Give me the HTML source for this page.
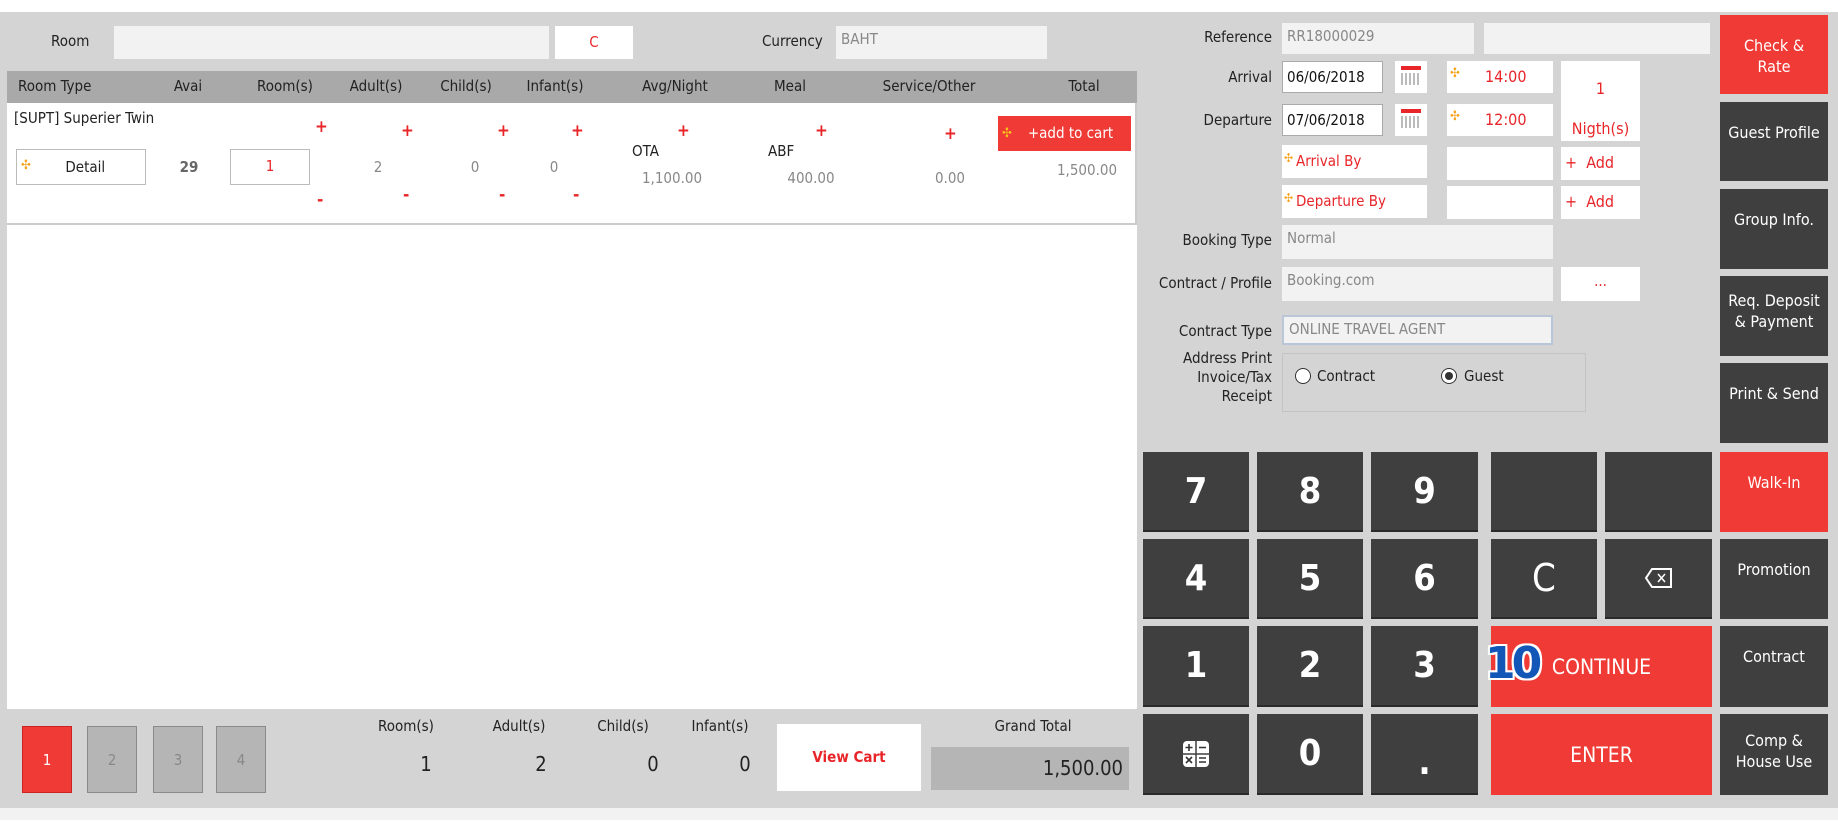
<!DOCTYPE html>
<html><head><meta charset="utf-8"><style>
*{box-sizing:border-box;margin:0;padding:0}
body{width:1838px;height:828px;background:#fff;font-family:"DejaVu Sans Condensed","Liberation Sans",sans-serif;font-size:15px;color:#222;position:relative;overflow:hidden}
.a{position:absolute}
.in{position:absolute;background:#f2f2f2;color:#888;padding:4px 5px}
.w{position:absolute;background:#fff}
.lbl{position:absolute;text-align:right}
.c{text-align:center}
.red{color:#e8262a}
.k{position:absolute;background:#3f3f3f;color:#fff;display:flex;align-items:center;justify-content:center;font-weight:bold;font-size:36px;border-bottom:2px solid #2a2a2a}
.sb{position:absolute;background:#3f3f3f;color:#fff;text-align:center;font-size:16px;padding-top:20px;line-height:21px}
.rb{background:#f03a35}
.pl{position:absolute;color:#e8262a;font-size:17px;font-weight:bold}
.pg{position:absolute;background:#b5b5b5;border:1px solid #8a8a8a;color:#888;display:flex;align-items:center;justify-content:center;font-size:15px}
#R{position:absolute;left:-5px;top:0;width:1838px;height:828px}
</style></head><body>
<div class="a" style="left:0;top:12px;width:1838px;height:796px;background:#d4d4d4"></div>
<div class="a" style="left:0;top:808px;width:1838px;height:12px;background:#f2f2f2"></div>

<!-- top left -->
<div class="a" style="left:51px;top:32px">Room</div>
<div class="in" style="left:114px;top:26px;width:435px;height:33px"></div>
<div class="w red c" style="left:555px;top:26px;width:78px;height:33px;line-height:33px">C</div>
<div class="a" style="left:762px;top:32px">Currency</div>
<div class="in" style="left:836px;top:26px;width:211px;height:33px">BAHT</div>

<!-- table -->
<div class="a" style="left:7px;top:71px;width:1130px;height:32px;background:#a9a9a9"></div>
<div class="a" style="left:7px;top:103px;width:1130px;height:606px;background:#fff"></div>
<div class="a" style="left:7px;top:223px;width:1130px;height:2px;background:#ccc"></div>
<div class="a" style="left:1135px;top:103px;width:2px;height:122px;background:#ccc"></div>
<div class="a" style="left:18px;top:77px">Room Type</div>
<div class="a c" style="left:148px;top:77px;width:80px">Avai</div>
<div class="a c" style="left:245px;top:77px;width:80px">Room(s)</div>
<div class="a c" style="left:336px;top:77px;width:80px">Adult(s)</div>
<div class="a c" style="left:426px;top:77px;width:80px">Child(s)</div>
<div class="a c" style="left:515px;top:77px;width:80px">Infant(s)</div>
<div class="a c" style="left:625px;top:77px;width:100px">Avg/Night</div>
<div class="a c" style="left:750px;top:77px;width:80px">Meal</div>
<div class="a c" style="left:869px;top:77px;width:120px">Service/Other</div>
<div class="a c" style="left:1044px;top:77px;width:80px">Total</div>

<div class="a" style="left:14px;top:109px">[SUPT] Superier Twin</div>
<div class="pl" style="left:315px;top:117px">+</div><div class="pl" style="left:401px;top:121px">+</div><div class="pl" style="left:497px;top:121px">+</div><div class="pl" style="left:571px;top:121px">+</div><div class="pl" style="left:677px;top:121px">+</div><div class="pl" style="left:815px;top:121px">+</div><div class="pl" style="left:944px;top:124px">+</div>
<div class="pl" style="left:317px;top:190px">-</div><div class="pl" style="left:403px;top:185px">-</div><div class="pl" style="left:499px;top:185px">-</div><div class="pl" style="left:573px;top:185px">-</div>
<div class="a" style="left:16px;top:149px;width:130px;height:36px;border:1px solid #bbb;line-height:34px;text-align:center">&nbsp;&nbsp;Detail<span class="a" style="left:4px;top:-1px;color:#f7a21b;font-size:13px">✣</span></div>
<div class="a c" style="left:169px;top:158px;width:40px;color:#666;font-weight:bold">29</div>
<div class="a c red" style="left:230px;top:149px;width:80px;height:36px;border:1px solid #bbb;line-height:32px">1</div>
<div class="a c" style="left:358px;top:158px;width:40px;color:#888">2</div>
<div class="a c" style="left:455px;top:158px;width:40px;color:#888">0</div>
<div class="a c" style="left:534px;top:158px;width:40px;color:#888">0</div>
<div class="a" style="left:632px;top:142px">OTA</div>
<div class="a" style="left:768px;top:142px">ABF</div>
<div class="a c" style="left:622px;top:169px;width:100px;color:#888">1,100.00</div>
<div class="a c" style="left:761px;top:169px;width:100px;color:#888">400.00</div>
<div class="a c" style="left:900px;top:169px;width:100px;color:#888">0.00</div>
<div class="a c" style="left:1037px;top:161px;width:100px;color:#888">1,500.00</div>
<div class="a c" style="left:998px;top:116px;width:133px;height:35px;background:#f03a35;color:#fff;line-height:35px;padding-left:12px">+add to cart<span class="a" style="left:4px;top:0;color:#f7c21b;font-size:13px">✣</span></div>

<!-- bottom bar -->
<div class="a" style="left:7px;top:709px;width:1130px;height:98px;background:#d4d4d4"></div>
<div class="pg" style="left:22px;top:726px;width:50px;height:67px;background:#f03a35;color:#fff;border-color:#c22">1</div>
<div class="pg" style="left:87px;top:726px;width:50px;height:67px">2</div>
<div class="pg" style="left:153px;top:726px;width:50px;height:67px">3</div>
<div class="pg" style="left:216px;top:726px;width:50px;height:67px">4</div>
<div class="a c" style="left:366px;top:717px;width:80px">Room(s)</div>
<div class="a c" style="left:479px;top:717px;width:80px">Adult(s)</div>
<div class="a c" style="left:583px;top:717px;width:80px">Child(s)</div>
<div class="a c" style="left:680px;top:717px;width:80px">Infant(s)</div>
<div class="a c" style="left:386px;top:752px;width:80px;font-size:20px">1</div>
<div class="a c" style="left:501px;top:752px;width:80px;font-size:20px">2</div>
<div class="a c" style="left:613px;top:752px;width:80px;font-size:20px">0</div>
<div class="a c" style="left:705px;top:752px;width:80px;font-size:20px">0</div>
<div class="w c red" style="left:777px;top:724px;width:144px;height:67px;line-height:67px;font-weight:bold">View Cart</div>
<div class="a c" style="left:973px;top:717px;width:120px">Grand Total</div>
<div class="a" style="left:931px;top:747px;width:198px;height:43px;background:#b5b5b5;text-align:right;padding:9px 6px;font-size:20px">1,500.00</div>

<div id="R">
<!-- right form -->
<div class="lbl" style="left:1150px;top:28px;width:127px">Reference</div>
<div class="in" style="left:1287px;top:23px;width:192px;height:31px">RR18000029</div>
<div class="in" style="left:1489px;top:23px;width:226px;height:31px"></div>
<div class="lbl" style="left:1150px;top:68px;width:127px">Arrival</div>
<div class="w" style="left:1287px;top:61px;width:101px;height:32px;border:1px solid #aaa;padding:6px 4px;color:#111">06/06/2018</div>
<div class="lbl" style="left:1150px;top:111px;width:127px">Departure</div>
<div class="w" style="left:1287px;top:104px;width:101px;height:32px;border:1px solid #aaa;padding:6px 4px;color:#111">07/06/2018</div>
<div class="w" style="left:1400px;top:61px;width:32px;height:32px"><div class="a" style="left:6px;top:5px;width:20px;height:4px;background:#e8262a"></div><div class="a" style="left:6px;top:12px;width:20px;height:12px;background:repeating-linear-gradient(90deg,#bbb 0 2px,#fff 2px 4px)"></div></div>
<div class="w" style="left:1400px;top:104px;width:32px;height:32px"><div class="a" style="left:6px;top:5px;width:20px;height:4px;background:#e8262a"></div><div class="a" style="left:6px;top:12px;width:20px;height:12px;background:repeating-linear-gradient(90deg,#bbb 0 2px,#fff 2px 4px)"></div></div>
<div class="w red" style="left:1452px;top:61px;width:106px;height:32px;padding:6px 0 0 38px;font-size:16px">14:00<span class="a" style="left:3px;top:5px;color:#f7a21b;font-size:13px">✣</span></div>
<div class="w red" style="left:1452px;top:104px;width:106px;height:32px;padding:6px 0 0 38px;font-size:16px">12:00<span class="a" style="left:3px;top:5px;color:#f7a21b;font-size:13px">✣</span></div>
<div class="w red c" style="left:1566px;top:61px;width:79px;height:80px;padding-top:8px;line-height:40px;font-size:16px">1<br>Nigth(s)</div>
<div class="w red" style="left:1287px;top:145px;width:145px;height:33px;padding:7px 0 0 14px">Arrival By<span class="a" style="left:2px;top:6px;color:#f7a21b;font-size:12px">✣</span></div>
<div class="w red" style="left:1287px;top:185px;width:145px;height:33px;padding:7px 0 0 14px">Departure By<span class="a" style="left:2px;top:6px;color:#f7a21b;font-size:12px">✣</span></div>
<div class="w" style="left:1452px;top:147px;width:106px;height:33px"></div>
<div class="w" style="left:1452px;top:186px;width:106px;height:33px"></div>
<div class="w red" style="left:1566px;top:147px;width:79px;height:33px;padding:6px 0 0 4px;font-size:16px">+&nbsp; Add</div>
<div class="w red" style="left:1566px;top:186px;width:79px;height:33px;padding:6px 0 0 4px;font-size:16px">+&nbsp; Add</div>
<div class="lbl" style="left:1140px;top:231px;width:137px">Booking Type</div>
<div class="in" style="left:1287px;top:225px;width:271px;height:34px">Normal</div>
<div class="lbl" style="left:1140px;top:274px;width:137px">Contract / Profile</div>
<div class="in" style="left:1287px;top:267px;width:271px;height:34px">Booking.com</div>
<div class="w red c" style="left:1566px;top:267px;width:79px;height:34px;line-height:28px">...</div>
<div class="lbl" style="left:1140px;top:322px;width:137px">Contract Type</div>
<div class="in" style="left:1287px;top:315px;width:271px;height:30px;border:2px solid #b8c6d8;padding:3px 5px">ONLINE TRAVEL AGENT</div>
<div class="lbl" style="left:1140px;top:349px;width:137px;line-height:19px">Address Print<br>Invoice/Tax<br>Receipt</div>
<div class="a" style="left:1287px;top:353px;width:304px;height:59px;border:1px solid #c4c4c4"></div>
<div class="a" style="left:1300px;top:368px;width:16px;height:16px;border:1px solid #333;border-radius:50%;background:#fff"></div>
<div class="a" style="left:1322px;top:367px">Contract</div>
<div class="a" style="left:1446px;top:368px;width:16px;height:16px;border:1px solid #333;border-radius:50%;background:#fff"><div class="a" style="left:3px;top:3px;width:8px;height:8px;border-radius:50%;background:#333"></div></div>
<div class="a" style="left:1469px;top:367px">Guest</div>

<!-- side buttons -->
<div class="sb rb" style="left:1725px;top:15px;width:108px;height:79px">Check &amp;<br>Rate</div>
<div class="sb" style="left:1725px;top:102px;width:108px;height:79px">Guest Profile</div>
<div class="sb" style="left:1725px;top:189px;width:108px;height:80px">Group Info.</div>
<div class="sb" style="left:1725px;top:276px;width:108px;height:80px;padding-top:14px">Req. Deposit<br>&amp; Payment</div>
<div class="sb" style="left:1725px;top:363px;width:108px;height:80px">Print &amp; Send</div>
<div class="sb rb" style="left:1725px;top:452px;width:108px;height:80px">Walk-In</div>
<div class="sb" style="left:1725px;top:539px;width:108px;height:80px">Promotion</div>
<div class="sb" style="left:1725px;top:626px;width:108px;height:81px">Contract</div>
<div class="sb" style="left:1725px;top:714px;width:108px;height:81px;padding-top:16px">Comp &amp;<br>House Use</div>

<!-- keypad -->
<div class="k" style="left:1148px;top:452px;width:106px;height:80px">7</div>
<div class="k" style="left:1262px;top:452px;width:106px;height:80px">8</div>
<div class="k" style="left:1376px;top:452px;width:107px;height:80px">9</div>
<div class="k" style="left:1496px;top:452px;width:106px;height:80px"></div>
<div class="k" style="left:1610px;top:452px;width:107px;height:80px"></div>
<div class="k" style="left:1148px;top:539px;width:106px;height:80px">4</div>
<div class="k" style="left:1262px;top:539px;width:106px;height:80px">5</div>
<div class="k" style="left:1376px;top:539px;width:107px;height:80px">6</div>
<div class="k" style="left:1496px;top:539px;width:106px;height:80px;font-weight:normal;font-size:38px">C</div>
<div class="k" style="left:1610px;top:539px;width:107px;height:80px"><svg width="30" height="22" viewBox="0 0 30 22"><path d="M8 2H27V20H8L2 11Z" fill="none" stroke="#fff" stroke-width="2"/><path d="M14 7L21 15M21 7L14 15" stroke="#fff" stroke-width="1.5"/></svg></div>
<div class="k" style="left:1148px;top:626px;width:106px;height:81px">1</div>
<div class="k" style="left:1262px;top:626px;width:106px;height:81px">2</div>
<div class="k" style="left:1376px;top:626px;width:107px;height:81px">3</div>
<div class="k rb" style="left:1496px;top:626px;width:221px;height:81px;font-weight:normal;font-size:21px;border:0">CONTINUE</div>
<div class="a" style="left:1490px;top:638px;font-family:'DejaVu Sans','Liberation Sans',sans-serif;font-weight:bold;font-size:44px;letter-spacing:-4px;color:#1256b8;text-shadow:2px 0 #fff,-2px 0 #fff,0 2px #fff,0 -2px #fff,2px 2px #fff,-2px -2px #fff,2px -2px #fff,-2px 2px #fff">10</div>
<div class="k" style="left:1148px;top:714px;width:106px;height:81px"><svg width="28" height="28" viewBox="0 0 28 28"><rect x="1" y="1" width="26" height="26" rx="4" fill="#fff"/><path d="M14 1V27M1 14H27" stroke="#3f3f3f" stroke-width="1.5"/><path d="M7 4V11M3.5 7.5H10.5M17 7.5H24M4 17L10 23M10 17L4 23M17 18H24M17 22H24" stroke="#333" stroke-width="1.6"/></svg></div>
<div class="k" style="left:1262px;top:714px;width:106px;height:81px">0</div>
<div class="k" style="left:1376px;top:714px;width:107px;height:81px;padding-top:18px">.</div>
<div class="k rb" style="left:1496px;top:714px;width:221px;height:81px;font-weight:normal;font-size:21px;border:0">ENTER</div>
</div>
</body></html>
